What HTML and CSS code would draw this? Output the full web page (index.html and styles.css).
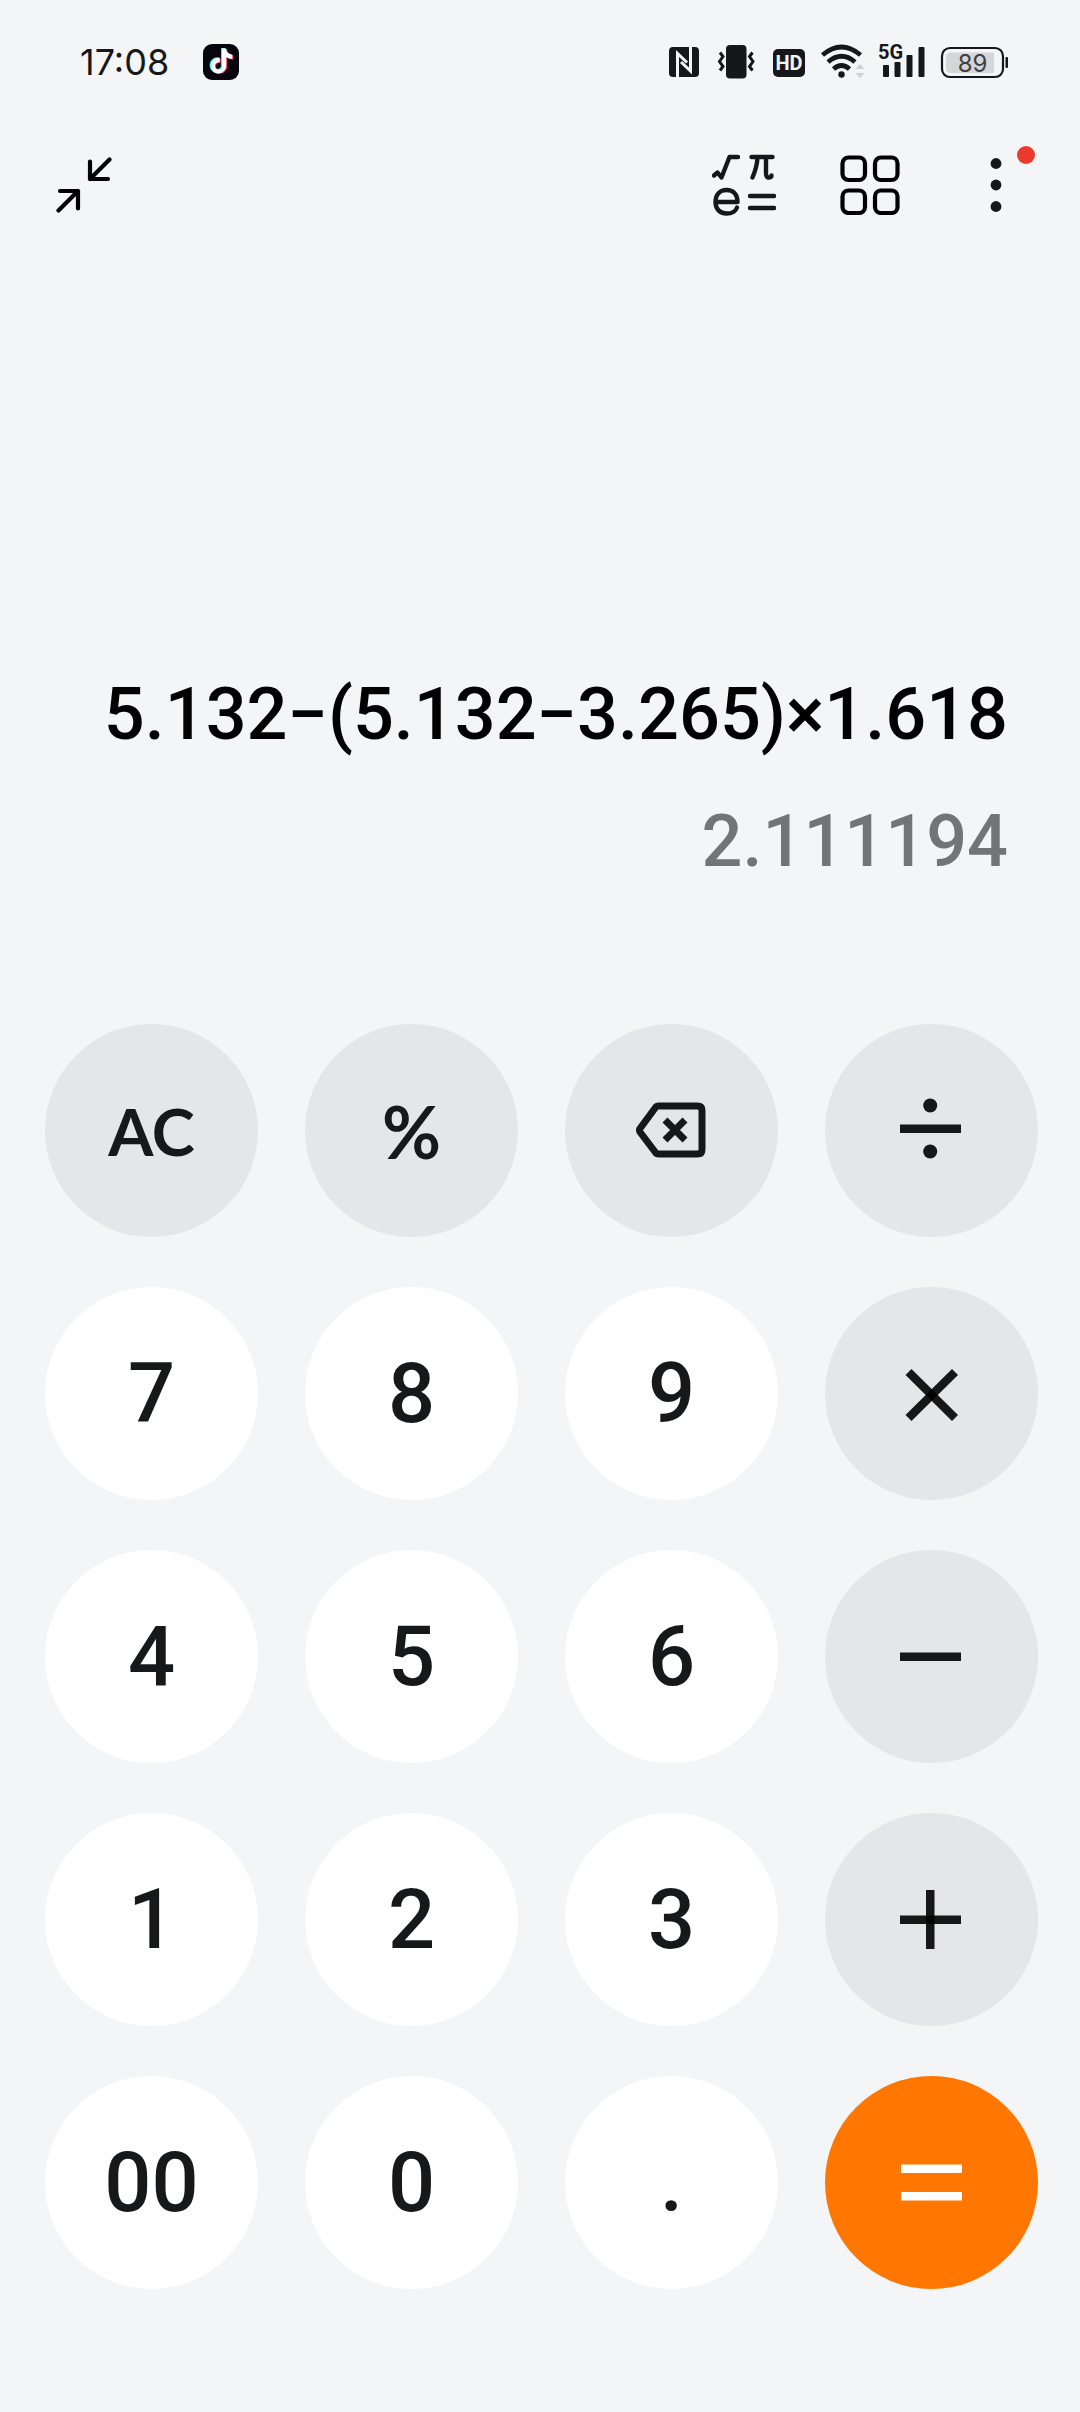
FILE: index.html
```html
<!DOCTYPE html>
<html lang="en">
<head>
<meta charset="utf-8">
<meta name="viewport" content="width=device-width, initial-scale=1">
<title>Calculator</title>
<link rel="stylesheet" href="styles.css">
</head>
<body>
<div class="app">
  <header class="status">
    <div class="status-left">
      <time class="clock">17:08</time>
      <svg class="app-badge" viewBox="0 0 36 36" role="img" aria-label="TikTok">
        <defs>
          <path id="note" d="M12.525.02c1.31-.02 2.61-.01 3.91-.02.08 1.53.63 3.09 1.75 4.17 1.12 1.11 2.7 1.62 4.24 1.79v4.03c-1.44-.05-2.89-.35-4.2-.97-.57-.26-1.1-.59-1.62-.93-.01 2.92.01 5.84-.02 8.75-.08 1.4-.54 2.79-1.35 3.94-1.31 1.92-3.58 3.17-5.91 3.21-1.43.08-2.86-.31-4.08-1.03-2.02-1.19-3.44-3.37-3.65-5.71-.02-.5-.03-1-.01-1.49.18-1.9 1.12-3.72 2.58-4.96 1.66-1.44 3.98-2.13 6.15-1.72.02 1.48-.04 2.96-.04 4.44-.99-.32-2.15-.23-3.02.37-.63.41-1.11 1.04-1.36 1.75-.21.51-.15 1.07-.14 1.61.24 1.64 1.82 3.02 3.5 2.87 1.12-.01 2.19-.66 2.77-1.61.19-.33.4-.67.41-1.06.1-1.79.06-3.57.07-5.36.01-4.03-.01-8.05.02-12.07z"/>
        </defs>
        <rect width="36" height="36" rx="9" fill="#07060f"/>
        <use href="#note" transform="translate(5 4) scale(1.04)" fill="#25f4e4"/>
        <use href="#note" transform="translate(7 5) scale(1.04)" fill="#fe2c58"/>
        <use href="#note" transform="translate(6 4.5) scale(1.04)" fill="#fff"/>
      </svg>
    </div>
    <div class="status-right">
      <svg width="32" height="36" viewBox="669 44 32 36" aria-hidden="true">
        <rect x="669" y="47" width="30" height="30" rx="4" fill="#15171a"/>
        <path d="M677.500 77V53.500L687 62.500M690.500 47V71L681 62" fill="none" stroke="#f4f5f7" stroke-width="3"/>
      </svg>
      <svg width="38" height="36" viewBox="717 44 38 36" aria-hidden="true">
        <rect x="726" y="45" width="20.500" height="33.500" rx="4" fill="#15171a"/>
        <path d="M720 52.500l3 4-3.500 5 3.500 5-3 4M752.500 52.500l-3 4 3.500 5-3.500 5 3 4" fill="none" stroke="#15171a" stroke-width="3"/>
      </svg>
      <svg width="34" height="36" viewBox="771 44 34 36" aria-hidden="true">
        <rect x="773" y="49" width="32" height="28" rx="5" fill="#15171a"/>
        <text class="hd" x="789" y="70" text-anchor="middle">HD</text>
      </svg>
      <svg width="42" height="36" viewBox="821 44 42 36" aria-hidden="true">
        <circle cx="841.500" cy="74.500" r="3.200" fill="#15171a"/>
        <path d="M822.500 55q19-16 38 0M828 62q13.500-11.500 27 0M833.500 69q8-7 16 0" fill="none" stroke="#15171a" stroke-width="4.800"/>
        <path d="M855.500 69l4.500-5 4.500 5zM855.500 73l4.500 5 4.500-5z" fill="#cfd0d2"/>
      </svg>
      <svg width="46" height="36" viewBox="879 44 46 36" aria-hidden="true">
        <g fill="#15171a">
          <rect x="883" y="65" width="6" height="12" rx="1"/>
          <rect x="894.500" y="62" width="6" height="15" rx="1"/>
          <rect x="906.500" y="55" width="6" height="22" rx="1"/>
          <rect x="918.500" y="47" width="6" height="30" rx="1"/>
        </g>
        <text class="net" x="878" y="59">5G</text>
      </svg>
      <svg width="68" height="36" viewBox="941 44 68 36" role="img" aria-label="Battery 89 percent">
        <rect x="942" y="48" width="61" height="29" rx="8" fill="none" stroke="#15171a" stroke-width="2.200"/>
        <path d="M951 52.500h43v20.500h-43q-5 0-5-5v-10.500q0-5 5-5z" fill="#d5d6d8"/>
        <rect x="1005.500" y="57" width="2.500" height="11" rx="1" fill="#15171a"/>
        <text class="batt" x="972.500" y="71.500" text-anchor="middle">89</text>
      </svg>
    </div>
  </header>

  <nav class="toolbar">
    <button class="tool" type="button" aria-label="Collapse to small window">
      <svg width="56" height="56" viewBox="0 0 56 56" fill="none" stroke="#000" stroke-width="4.200" stroke-linecap="round" stroke-linejoin="round">
        <path d="M53.500 2.500L34 22M34 4.500V22H52M2.500 53.500L22 34M4 34H22V51.500"/>
      </svg>
    </button>
    <div class="tool-group">
      <button class="tool" type="button" aria-label="Scientific functions">
        <svg width="64" height="62" viewBox="0 0 64 62" fill="none" stroke="#15171a" stroke-width="4.400" stroke-linecap="round" stroke-linejoin="round">
          <path d="M2 21.500L5.500 18.500L9.500 23.500L17.500 3H26M39.500 3H60.500M45.500 3.500Q45 13 40.500 23.500M54 3.500V19.500Q54 24 57.500 23.500Q59.500 23 59.500 21.500"/>
          <path d="M4 48H25.500M25.500 48C25.500 40 21 36 14.500 36C8 36 3.500 40.500 3.500 48C3.500 55 8 59.500 14.500 59.500C20 59.500 24 57 25 53.500"/>
          <path d="M38 42H62M38 54H62"/>
        </svg>
      </button>
      <button class="tool" type="button" aria-label="More tools">
        <svg width="60" height="60" viewBox="0 0 60 60" fill="none" stroke="#000" stroke-width="4.200">
          <rect x="2.500" y="2.500" width="22.500" height="22.500" rx="6"/>
          <rect x="35" y="2.500" width="22.500" height="22.500" rx="6"/>
          <rect x="2.500" y="35.500" width="22.500" height="22.500" rx="6"/>
          <rect x="35" y="35.500" width="22.500" height="22.500" rx="6"/>
        </svg>
      </button>
      <button class="tool" type="button" aria-label="Menu">
        <svg width="12" height="56" viewBox="0 0 12 56" fill="#15171a">
          <circle cx="6" cy="6.500" r="5.400"/>
          <circle cx="6" cy="28" r="5.400"/>
          <circle cx="6" cy="49.500" r="5.400"/>
        </svg>
        <span class="dot"></span>
      </button>
    </div>
  </nav>

  <main class="display">
    <div class="expression">5.132−(5.132−3.265)×1.618</div>
    <output class="result">2.111194</output>
  </main>

  <section class="keypad" aria-label="Keypad">
    <button class="key soft word" type="button">AC</button>
    <button class="key soft percent" type="button">%</button>
    <button class="key soft" type="button" aria-label="Backspace">
      <svg class="glyph" viewBox="-40.500 -40.500 81 81" fill="none" stroke="#15171a" stroke-width="7">
        <path stroke-linejoin="round" d="M-13 -24.500H26Q30.500 -24.500 30.500 -20V19Q30.500 23.500 26 23.500H-13Q-15 23.500 -16 22L-31.500 1.500Q-32.500 -.5 -31.500 -2L-16 -23Q-15 -24.500 -13 -24.500Z"/>
        <path d="M-6.500 -10.500L13.500 9.500M13.500 -10.500L-6.500 9.500"/>
      </svg>
    </button>
    <button class="key soft" type="button" aria-label="Divide">
      <svg class="glyph" viewBox="-40.500 -40.500 81 81" fill="#15171a">
        <rect x="-31.500" y="-6" width="61" height="8.500"/>
        <circle cx="-1.300" cy="-25" r="7"/>
        <circle cx="-1.300" cy="21" r="7"/>
      </svg>
    </button>

    <button class="key" type="button">7</button>
    <button class="key" type="button">8</button>
    <button class="key" type="button">9</button>
    <button class="key soft" type="button" aria-label="Multiply">
      <svg class="glyph" viewBox="-40.500 -40.500 81 81" stroke="#000" stroke-opacity=".9" stroke-width="8.500">
        <path d="M-23 -21.500L23.500 24.500"/>
        <path d="M23.500 -21.500L-23 24.500"/>
      </svg>
    </button>

    <button class="key" type="button">4</button>
    <button class="key" type="button">5</button>
    <button class="key" type="button">6</button>
    <button class="key soft" type="button" aria-label="Subtract">
      <svg class="glyph" viewBox="-40.500 -40.500 81 81" fill="#15171a">
        <rect x="-31.500" y="-4" width="61" height="8.500"/>
      </svg>
    </button>

    <button class="key" type="button">1</button>
    <button class="key" type="button">2</button>
    <button class="key" type="button">3</button>
    <button class="key soft" type="button" aria-label="Add">
      <svg class="glyph" viewBox="-40.500 -40.500 81 81" fill="#000" fill-opacity=".9">
        <rect x="-31.500" y="-4" width="61" height="8.500"/>
        <rect x="-5.500" y="-29.500" width="8.500" height="59"/>
      </svg>
    </button>

    <button class="key" type="button">00</button>
    <button class="key" type="button">0</button>
    <button class="key" type="button">.</button>
    <button class="key equals" type="button" aria-label="Equals">
      <svg class="glyph" viewBox="-40.500 -40.500 81 81" fill="#fff">
        <rect x="-30.500" y="-18" width="61" height="8.500"/>
        <rect x="-30.500" y="9.500" width="61" height="8.500"/>
      </svg>
    </button>
  </section>
</div>
</body>
</html>
```
FILE: styles.css
```css
* {
  box-sizing: border-box;
}

body {
  margin: 0;
  background: #f3f5f7;
  color: #17181a;
  font-family: Roboto, "Liberation Sans", sans-serif;
}

button {
  padding: 0;
  border: 0;
  background: none;
  color: inherit;
  font: inherit;
  cursor: pointer;
}

svg {
  display: block;
}

.app {
  display: flex;
  flex-direction: column;
  min-height: 100vh;
}

/* Status bar */
.status {
  display: flex;
  align-items: center;
  justify-content: space-between;
  height: 124px;
  padding: 0 71px 0 80px;
}

.status-left {
  display: flex;
  align-items: center;
  gap: 34px;
}

.clock {
  font-family: Inter, sans-serif;
  font-size: 36px;
  line-height: 44px;
}

.app-badge {
  width: 36px;
  height: 36px;
}

.status-right {
  display: flex;
  align-items: center;
  gap: 16px;
}

.status-right svg {
  overflow: visible;
}

.hd {
  fill: #f4f5f7;
  font-size: 20px;
  font-weight: 700;
}

.net {
  fill: #15171a;
  font-size: 20px;
  font-weight: 700;
}

.batt {
  fill: #3e4043;
  font-family: Inter, sans-serif;
  font-size: 24px;
}

/* Toolbar */
.toolbar {
  display: flex;
  justify-content: space-between;
  padding: 0 21px;
}

.tool-group {
  display: flex;
}

.tool {
  position: relative;
  display: flex;
  align-items: center;
  justify-content: center;
  width: 126px;
  height: 122px;
}

.dot {
  position: absolute;
  top: 22px;
  right: 24px;
  width: 18px;
  height: 18px;
  border-radius: 50%;
  background: #ea3a2d;
}

/* Expression and running result */
.display {
  flex: 1;
  display: flex;
  flex-direction: column;
  align-items: flex-end;
  justify-content: flex-end;
  padding: 0 72px 119px;
  font-size: 72px;
  font-weight: 500;
  line-height: 127px;
  white-space: nowrap;
}

.expression {
  color: #000;
}

.result {
  color: #737477;
}

/* Keypad */
.keypad {
  display: grid;
  grid-template-columns: repeat(4, 1fr);
  gap: 50px 47px;
  padding: 0 42px 123px 45px;
}

.key {
  display: flex;
  align-items: center;
  justify-content: center;
  aspect-ratio: 1;
  border-radius: 50%;
  background: #fff;
  font-size: 83px;
  font-weight: 500;
  line-height: 96px;
}

.soft {
  background: #e5e6ea;
}

.word {
  font-family: Lato, sans-serif;
  font-size: 65px;
  font-weight: 700;
}

.percent {
  font-family: Lato, sans-serif;
  font-size: 72px;
  font-weight: 700;
}

.equals {
  background: #ff7700;
}

.glyph {
  width: 81px;
  height: 81px;
}
```
